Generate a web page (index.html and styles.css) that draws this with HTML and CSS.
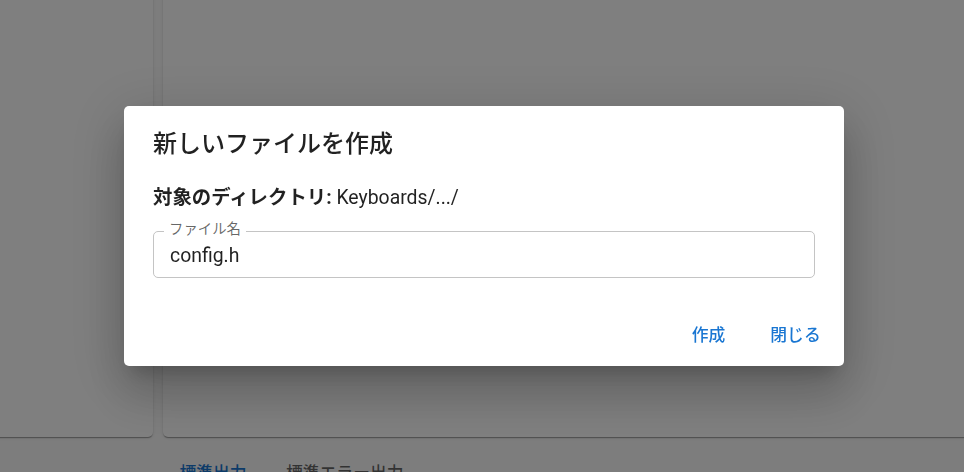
FILE: index.html
```html
<!DOCTYPE html>
<html lang="ja">
<head>
    <meta charset="UTF-8">
    <meta name="viewport" content="width=device-width, initial-scale=1.0">
    <title>新しいファイルを作成</title>
    <link rel="stylesheet" href="styles.css">
</head>
<body>

<div class="page">
    <div class="panels">
        <div class="card card-tree"></div>
        <div class="card card-editor"></div>
    </div>

    <div class="tabs">
        <div class="tab tab-active">標準出力</div>
        <div class="tab">標準エラー出力</div>
    </div>
</div>

<div class="backdrop">
    <div class="dialog">
        <h2 class="dialog-title">新しいファイルを作成</h2>

        <div class="dialog-content">
            <p class="dir-line"><b>対象のディレクトリ:</b> Keyboards/.../</p>

            <div class="field">
                <label for="filename" class="field-label">ファイル名</label>
                <input type="text" id="filename" class="field-input" value="config.h">
            </div>
        </div>

        <div class="dialog-actions">
            <button class="btn">作成</button>
            <button class="btn">閉じる</button>
        </div>
    </div>
</div>

</body>
</html>
```

FILE: styles.css
```css
html, body {
    height: 100%;
}
body {
    margin: 0;
    font-family: Roboto, "Noto Sans CJK JP", sans-serif;
    background-color: #fafafa;
    color: rgba(0, 0, 0, 0.87);
    overflow: hidden;
}
.page {
    display: flex;
    flex-direction: column;
}
.panels {
    display: flex;
    gap: 10px;
    height: 445px;
    margin: -8px -8px 0 -8px;
}
.card {
    background-color: #fff;
    border-radius: 5px;
    box-shadow: 0 2px 1px -1px rgba(0, 0, 0, 0.2),
                0 1px 1px 0 rgba(0, 0, 0, 0.14),
                0 1px 3px 0 rgba(0, 0, 0, 0.12);
}
.card-tree {
    width: 161px;
}
.card-editor {
    flex: 1;
}
.tabs {
    display: flex;
    padding-left: 159px;
    margin-top: 12px;
}
.tab {
    min-width: 108px;
    box-sizing: border-box;
    padding: 14px 19px;
    font-size: 16.8px;
    font-weight: 500;
    line-height: 1.25;
    text-align: center;
    color: rgba(0, 0, 0, 0.6);
}
.tab-active {
    color: #1976d2;
}

/* dialog */
.backdrop {
    position: fixed;
    inset: 0;
    background-color: rgba(0, 0, 0, 0.5);
    display: flex;
    align-items: center;
    justify-content: center;
    padding-left: 4px;
}
.dialog {
    width: 720px;
    height: 260px;
    box-sizing: border-box;
    background-color: #fff;
    border-radius: 5px;
    box-shadow: 0 13px 18px -8px rgba(0, 0, 0, 0.2),
                0 29px 46px 4px rgba(0, 0, 0, 0.14),
                0 11px 55px 10px rgba(0, 0, 0, 0.12);
    display: flex;
    flex-direction: column;
}
.dialog-title {
    margin: 0;
    padding: 19px 29px;
    font-size: 24px;
    font-weight: 500;
    line-height: 38.4px;
}
.dialog-content {
    padding: 0 29px;
}
.dir-line {
    margin: 2px 0 0;
    font-size: 19.4px;
    line-height: 28.8px;
}
.field {
    position: relative;
    margin-top: 18px;
}
.field-label {
    position: absolute;
    top: -10px;
    left: 11px;
    padding: 0 5px;
    background-color: #fff;
    font-size: 14.4px;
    line-height: 18px;
    color: rgba(0, 0, 0, 0.6);
}
.field-input {
    display: block;
    width: 100%;
    height: 47px;
    box-sizing: border-box;
    padding: 2px 16px 0;
    border: 1px solid #c4c4c4;
    border-radius: 5px;
    font-family: inherit;
    font-size: 19.4px;
    color: rgba(0, 0, 0, 0.87);
    outline: none;
}
.dialog-actions {
    margin-top: auto;
    display: flex;
    justify-content: flex-end;
    gap: 10px;
    padding: 10px;
}
.btn {
    min-width: 77px;
    height: 44px;
    padding: 7px 10px;
    background: none;
    border: none;
    font-family: inherit;
    font-size: 16.8px;
    font-weight: 500;
    color: #1976d2;
    cursor: pointer;
}
```
